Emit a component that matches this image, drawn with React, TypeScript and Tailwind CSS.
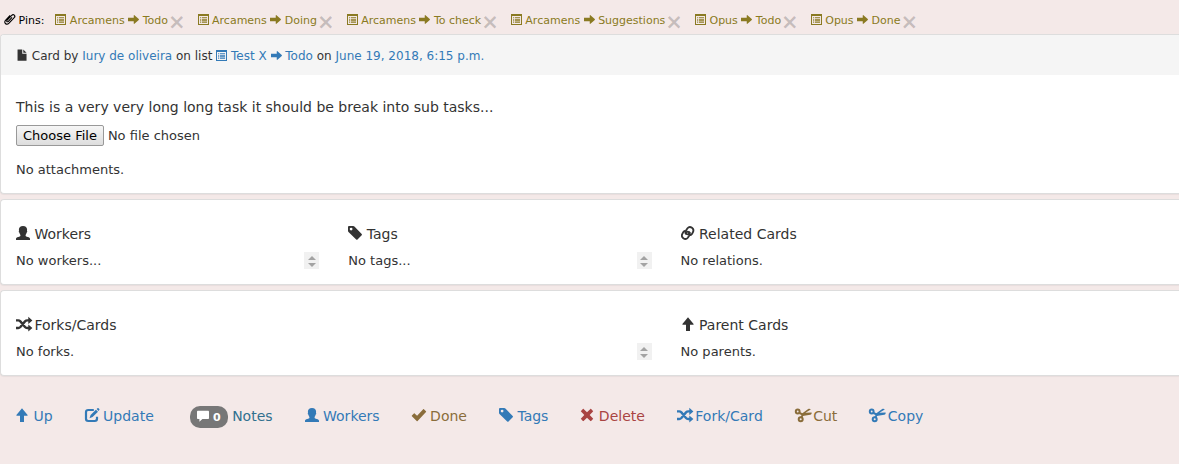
import { useId } from "react";
import type { ReactNode } from "react";

type IconName =
  | "clip" | "list" | "right" | "file" | "user" | "tag" | "link" | "up"
  | "random" | "edit" | "comment" | "ok" | "remove" | "scissors";

const shapes: Record<IconName, ReactNode> = {
  clip: (
    <path
      d="M10.200 4.200 5.600 9.300c-.7.800-1.500.7-1.900.3-.5-.5-.4-1.200.3-1.900l5.800-5.900c1.100-1.100 2.400-1.100 3.300-.3.900.9.900 2.200-.1 3.200l-6.600 6.900c-1.500 1.500-3.400 1.600-4.600.5C.6 11 .7 9.300 2.200 7.700l5.600-5.900"
      fill="none"
      stroke="currentColor"
      strokeWidth="1.400"
    />
  ),
  list: (
    <path
      fillRule="evenodd"
      d="M0 0h14v14H0zM1.300 2.600v10.100h11.400V2.600zM2.700 4h1.300v1.200H2.700zM5 4h6.500v1.200H5zM2.700 6h1.300v1.200H2.700zM5 6h6.500v1.200H5zM2.700 8h1.300v1.200H2.700zM5 8h6.500v1.200H5zM2.700 10h1.300v1.200H2.700zM5 10h6.500v1.200H5z"
    />
  ),
  right: <path d="M0 4.900h7.300V2c0-.6.500-.8.900-.4l5.500 4.800c.4.400.4.800 0 1.200l-5.500 4.800c-.4.400-.9.200-.9-.4V9.100H0z" />,
  file: <path d="M2.300.5h5v5h5v7.800c0 .3-.2.500-.5.500H2.300c-.3 0-.5-.2-.5-.5V1c0-.3.200-.5.500-.5zM8.500.5l3.800 3.800H8.500z" />,
  user: (
    <path d="M7 0c2.600 0 4.100 1.500 4.100 3.600 0 .6-.1 1-.1 1.400.4.200.3 1.300-.3 1.600-.2 1-.6 1.700-1.100 2.300v.9c.2.800 1 1 2.100 1.300 1.600.5 2.300.9 2.300 1.600V14H0v-1.300c0-.7.700-1.100 2.300-1.600 1.100-.3 1.900-.5 2.100-1.300v-.9c-.5-.6-.9-1.300-1.100-2.300-.6-.3-.7-1.400-.3-1.600 0-.4-.1-.8-.1-1.400C2.900 1.500 4.400 0 7 0z" />
  ),
  tag: (
    <path
      fillRule="evenodd"
      d="M0 1.200C0 .5.500 0 1.200 0h4c.5 0 .9.200 1.200.5l7.300 7.400c.4.400.4.900 0 1.300L9.500 13.500c-.4.400-.9.400-1.300 0L.5 6C.2 5.600 0 5.300 0 4.800zM3.100 1.700a1.400 1.400 0 1 0 0 2.800 1.400 1.400 0 0 0 0-2.800z"
    />
  ),
  link: (
    <g fill="none" stroke="currentColor" strokeWidth="1.800">
      <path d="M8.900 9c.8.100 1.400-.3 1.900-.9l1-1.500c.9-1.600.7-3.700-.8-4.800C9.400.6 7.600.9 6.500 2.300L5 4.600c-.8 1.300-.5 2.700.6 3.500.8.500 1.600.3 2.200-.5l1.200-1.800" />
      <path d="M4.400 5c-.8-.1-1.400.3-1.900.9l-1 1.500c-.9 1.600-.7 3.700.8 4.800 1.600 1.200 3.400.9 4.500-.5l1.500-2.300c.8-1.300.5-2.700-.6-3.500-.8-.5-1.600-.3-2.200.5L4.300 8.200" />
    </g>
  ),
  up: <path d="M5 14V7.700H2c-.6 0-.8-.5-.4-1L6.400.9c.4-.5.800-.5 1.200 0l4.800 5.800c.4.500.2 1-.4 1H9V14z" />,
  random: (
    <>
      <path
        d="M0 3.400h2.200c1 0 1.600.4 2.200 1L9 10c.6.700 1.200 1 2.200 1h2M0 11h2.200c1 0 1.600-.4 2.200-1L9 4.400c.6-.6 1.200-1 2.200-1h2"
        fill="none"
        stroke="currentColor"
        strokeWidth="2.400"
      />
      <path d="M12.300-.2 16.400 3.400l-4.100 3.600zM12.300 7.400 16.400 11l-4.100 3.600z" />
    </>
  ),
  edit: (
    <>
      <path
        d="M8.800 2H3.200C1.800 2 1 2.800 1 4.200v6.600C1 12.200 1.800 13 3.200 13h6.600c1.400 0 2.200-.8 2.200-2.200V8.700"
        fill="none"
        stroke="currentColor"
        strokeWidth="2.200"
      />
      <path d="M10.900 1.700l2.100 2.100-5.400 5.300-3.100 1.100 1.100-3.100zM11.600 1l.9-.8c.3-.3.700-.3 1 0l.8.8c.3.300.3.700 0 1l-.8.900z" />
    </>
  ),
  comment: <path d="M.9 1h12.200c.5 0 .9.400.9.900v7.700c0 .5-.4.900-.9.900H6.300L2.800 13.800v-3.300H.9c-.5 0-.9-.4-.9-.9V1.900C0 1.400.4 1 .9 1z" />,
  ok: <path d="M11.200 1.200c.2-.2.500-.2.700 0l2.100 2.100c.2.200.2.500 0 .7L5.600 13c-.3.300-.6.300-.9 0L-.1 8.200c-.2-.2-.2-.5 0-.7L1.900 5.400c.2-.2.500-.2.700 0l2.500 2.400z" />,
  remove: (
    <path d="M3.600 1 7 4.300 10.400 1c.2-.2.500-.2.700 0L13 2.900c.2.200.2.500 0 .7L9.700 7l3.300 3.400c.2.200.2.500 0 .7L11.100 13c-.2.200-.5.200-.7 0L7 9.700 3.600 13c-.2.200-.5.200-.7 0L1 11.100c-.2-.2-.2-.5 0-.7L4.300 7 1 3.600c-.2-.2-.2-.5 0-.7L2.900 1c.2-.2.500-.2.700 0z" />
  ),
  scissors: (
    <>
      <g fill="none" stroke="currentColor" strokeWidth="2">
        <ellipse cx="2.700" cy="3.500" rx="1.900" ry="2" />
        <ellipse cx="5.700" cy="11.200" rx="2" ry="2" />
        <path d="M4.500 5l3.500 1.700M6.400 9.300l1.400-3" />
      </g>
      <path d="M7 5.400 13.200 1c.9-.6 2-.3 2.600.6L10.400 4.700l6.200-.2c.3 1-.3 2-1.300 2.300L7.600 8z" />
    </>
  ),
};

function Icon({ name, className = "size-[14px]" }: { name: IconName; className?: string }) {
  return (
    <svg
      viewBox="0 0 14 14"
      fill="currentColor"
      aria-hidden="true"
      className={`inline-block overflow-visible align-[-1px] ${className}`}
    >
      {shapes[name]}
    </svg>
  );
}

const pins = [
  ["Arcamens", "Todo"],
  ["Arcamens", "Doing"],
  ["Arcamens", "To check"],
  ["Arcamens", "Suggestions"],
  ["Opus", "Todo"],
  ["Opus", "Done"],
];

function Pins() {
  return (
    <nav aria-label="Pins" className="flex h-[34px] items-center pl-1 pt-[9px] text-[11px] text-black whitespace-nowrap">
      <span className="mr-[11px]">
        <Icon name="clip" className="size-[11px]" /> Pins:
      </span>
      <ul className="flex gap-3">
        {pins.map(([board, list]) => (
          <li key={board + list} className="flex items-center">
            <a href="#" className="text-[#8a7a22]">
              <Icon name="list" className="size-[11px]" /> {board}{" "}
              <Icon name="right" className="size-[11px]" /> {list}
            </a>
            <button
              type="button"
              aria-label={`Unpin ${board} ${list}`}
              className="h-4 text-[21px] leading-4 font-bold text-black/20"
            >
              ×
            </button>
          </li>
        ))}
      </ul>
    </nav>
  );
}

function Panel({ header, children }: { header?: ReactNode; children: ReactNode }) {
  return (
    <section className="mb-[5px] overflow-hidden rounded-l border border-r-0 border-[#ddd] bg-white shadow-[0_1px_1px_rgba(0,0,0,0.05)]">
      {header}
      {children}
    </section>
  );
}

function Scroller({ label }: { label: string }) {
  return (
    <span className="flex w-[15px] flex-col bg-[#f1f1f1] text-[#a3a3a3]">
      <button type="button" aria-label={`Previous ${label}`} className="flex h-[9px] items-center justify-center pt-[2px]">
        <svg viewBox="0 0 8 4" className="h-1 w-2" fill="currentColor"><path d="M4 0l4 4H0z" /></svg>
      </button>
      <button type="button" aria-label={`Next ${label}`} className="flex h-2 items-center justify-center">
        <svg viewBox="0 0 8 4" className="h-1 w-2" fill="currentColor"><path d="M0 0h8L4 4z" /></svg>
      </button>
    </span>
  );
}

type FieldProps = { icon: IconName; title: string; empty: string; scroll?: boolean; className?: string };

function Field({ icon, title, empty, scroll, className = "" }: FieldProps) {
  return (
    <div className={`pr-[29px] ${className}`}>
      <h4 className="text-[14px] leading-5">
        <Icon name={icon} /> {title}
      </h4>
      <div className="mt-2 flex h-[17px] items-center justify-between text-[13px]">
        <p>{empty}</p>
        {scroll && <Scroller label={title} />}
      </div>
    </div>
  );
}

const fieldGrid = "grid grid-cols-[2fr_2fr_3fr] pb-[15px] pl-[15px] pt-6";

function Action({ icon, tone = "text-[#337ab7]", children }: { icon?: IconName; tone?: string; children: ReactNode }) {
  return (
    <a href="#" className={tone}>
      {icon && <Icon name={icon} />} {children}
    </a>
  );
}

export default function App() {
  const fileId = useId();
  return (
    <div className="min-h-screen overflow-hidden bg-[#f4e9e8] font-['DejaVu_Sans',sans-serif] text-[#333]">
      <Pins />
      <main>
        <Panel
          header={
            <header className="h-10 bg-[#f5f5f5] pl-[15px] text-[12px] leading-[43px]">
              <Icon name="file" className="size-3" /> Card by{" "}
              <a href="#" className="text-[#337ab7]">Iury de oliveira</a> on list{" "}
              <a href="#" className="text-[#337ab7]">
                <Icon name="list" className="size-[11px]" /> Test X <Icon name="right" className="size-[11px]" /> Todo
              </a>{" "}
              on <a href="#" className="text-[#337ab7]">June 19, 2018, 6:15 p.m.</a>
            </header>
          }
        >
          <div className="px-[15px] pb-[13px] pt-[22px] text-[13px]">
            <h4 className="text-[14px] leading-5">
              <label htmlFor={fileId}>This is a very very long long task it should be break into sub tasks...</label>
            </h4>
            <input
              id={fileId}
              type="file"
              className="mt-2 block h-[21px] w-full text-[13px] leading-[17px] file:mr-1 file:h-[21px] file:rounded-[2px] file:border file:border-solid file:border-[#999] file:bg-linear-to-b file:from-[#f6f6f6] file:to-[#dddddd] file:px-[6px] file:text-black"
            />
            <p className="mt-[14px] leading-5">No attachments.</p>
          </div>
        </Panel>
        <Panel>
          <div className={fieldGrid}>
            <Field icon="user" title="Workers" empty="No workers..." scroll />
            <Field icon="tag" title="Tags" empty="No tags..." scroll />
            <Field icon="link" title="Related Cards" empty="No relations." />
          </div>
        </Panel>
        <Panel>
          <div className={fieldGrid}>
            <Field icon="random" title="Forks/Cards" empty="No forks." scroll className="col-span-2" />
            <Field icon="up" title="Parent Cards" empty="No parents." />
          </div>
        </Panel>
      </main>
      <nav aria-label="Card actions" className="flex gap-8 px-[15px] pt-[25px] text-[14px] leading-5 whitespace-nowrap">
        <Action icon="up">Up</Action>
        <Action icon="edit">Update</Action>
        <Action tone="text-[#31708f]">
          &nbsp;
          <span className="inline-block rounded-[10px] bg-[#777] px-[7px] py-1 align-middle text-[11px] leading-3 font-bold text-white">
            <Icon name="comment" className="size-3" /> 0
          </span>{" "}
          Notes
        </Action>
        <Action icon="user">Workers</Action>
        <Action icon="ok" tone="text-[#8a6d3b]">Done</Action>
        <Action icon="tag">Tags</Action>
        <Action icon="remove" tone="text-[#a94442]">Delete</Action>
        <Action icon="random">Fork/Card</Action>
        <Action icon="scissors" tone="text-[#8a6d3b]">Cut</Action>
        <Action icon="scissors">Copy</Action>
      </nav>
    </div>
  );
}
